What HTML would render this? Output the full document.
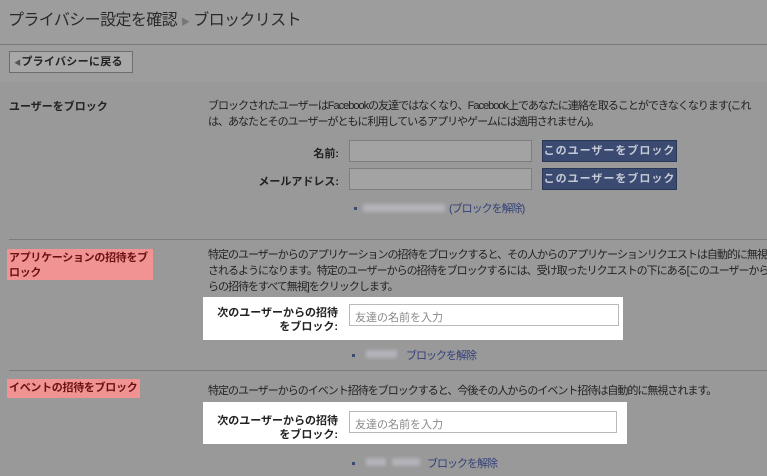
<!DOCTYPE html>
<html><head><meta charset="utf-8"><style>
*{margin:0;padding:0;box-sizing:border-box}
body{width:767px;height:476px;overflow:hidden;background:#999;font-family:"Liberation Sans","Noto Sans CJK JP",sans-serif;font-size:11px;color:#222;position:relative}
.a{position:absolute;white-space:nowrap}
.d{letter-spacing:-1px}
.b{font-weight:bold}
.inp{position:absolute;background:#a3a3a3;border:1px solid #7e7e7e}
.winp{position:absolute;background:#fff;border:1px solid #b9b9b9;color:#888;padding:4px 5px;font-size:11px}
.btn{position:absolute;background:#3a4a70;border:1px solid #2a3656;color:#c6cad6;font-weight:bold;font-size:11px;text-align:center;line-height:20px;letter-spacing:1px}
.hr{position:absolute;left:9px;right:0;height:1px;background:#7d7d7d}
.pink{position:absolute;background:#f29393;color:#6a1212;font-weight:bold;padding:2px 2px;line-height:15px;white-space:nowrap;letter-spacing:-0.3px}
.white{position:absolute;background:#fff}
.blur{position:absolute;background:#b2b2b8;height:8px;filter:blur(1.5px)}
.bul{position:absolute;width:3px;height:3px;background:#3a4a70}
.lk{color:#33407a}
</style></head><body>
<div style="position:absolute;left:0;top:0;width:767px;height:82px;background:#9d9d9d"></div>
<div class="a" style="left:8px;top:6px;font-size:16px;color:#2a2a2a;letter-spacing:-0.6px">プライバシー設定を確認 <span style="font-size:9px;color:#777">▶</span> ブロックリスト</div>
<div style="position:absolute;left:0;right:0;top:44px;height:1px;background:#7a7a7a"></div>
<div class="a b" style="left:9px;top:51px;width:124px;height:22px;border:1px solid #6e6e6e;background:#a8a8a8;line-height:20px;padding-left:4px;font-size:11px;letter-spacing:0.3px"><span style="font-size:7px;color:#555">◀</span>プライバシーに戻る</div>

<div class="a b" style="left:9px;top:98px">ユーザーをブロック</div>
<div class="a d" style="left:208px;top:98px;line-height:16px">ブロックされたユーザーはFacebookの友達ではなくなり、Facebook上であなたに連絡を取ることができなくなります(これ<br>は、あなたとそのユーザーがともに利用しているアプリやゲームには適用されません)。</div>
<div class="a b" style="left:300px;top:145px;width:39px;text-align:right">名前:</div>
<div class="inp" style="left:349px;top:140px;width:183px;height:22px"></div>
<div class="btn" style="left:542px;top:140px;width:135px;height:22px">このユーザーをブロック</div>
<div class="a b" style="left:240px;top:173px;width:99px;text-align:right">メールアドレス:</div>
<div class="inp" style="left:349px;top:168px;width:183px;height:22px"></div>
<div class="btn" style="left:542px;top:168px;width:135px;height:22px">このユーザーをブロック</div>
<div class="bul" style="left:354px;top:207px"></div>
<div class="blur" style="left:363px;top:204px;width:82px"></div>
<div class="a lk d" style="left:449px;top:200px">(ブロックを解除)</div>

<div class="hr" style="top:239px"></div>
<div class="pink" style="left:7px;top:249px;width:146px;height:31px">アプリケーションの招待をブ<br>ロック</div>
<div class="a d" style="left:208px;top:247px;line-height:16px">特定のユーザーからのアプリケーションの招待をブロックすると、その人からのアプリケーションリクエストは自動的に無視<br>されるようになります。特定のユーザーからの招待をブロックするには、受け取ったリクエストの下にある[このユーザーから<br>らの招待をすべて無視]をクリックします。</div>
<div class="white" style="left:203px;top:297px;width:420px;height:43px"></div>
<div class="a b" style="left:203px;top:306px;width:135px;text-align:right;line-height:14px">次のユーザーからの招待<br>をブロック:</div>
<div class="winp" style="left:349px;top:304px;width:270px;height:22px">友達の名前を入力</div>
<div class="bul" style="left:352px;top:354px"></div>
<div class="blur" style="left:366px;top:350px;width:31px"></div>
<div class="a lk d" style="left:406px;top:347px">ブロックを解除</div>

<div class="hr" style="top:370px"></div>
<div class="pink" style="left:7px;top:379px;width:133px;height:19px">イベントの招待をブロック</div>
<div class="a d" style="left:208px;top:382px">特定のユーザーからのイベント招待をブロックすると、今後その人からのイベント招待は自動的に無視されます。</div>
<div class="white" style="left:203px;top:402px;width:424px;height:42px"></div>
<div class="a b" style="left:203px;top:414px;width:135px;text-align:right;line-height:14px">次のユーザーからの招待<br>をブロック:</div>
<div class="winp" style="left:349px;top:411px;width:268px;height:22px">友達の名前を入力</div>
<div class="bul" style="left:352px;top:462px"></div>
<div class="blur" style="left:366px;top:458px;width:20px"></div>
<div class="blur" style="left:392px;top:458px;width:28px"></div>
<div class="a lk d" style="left:427px;top:455px">ブロックを解除</div>
</body></html>
